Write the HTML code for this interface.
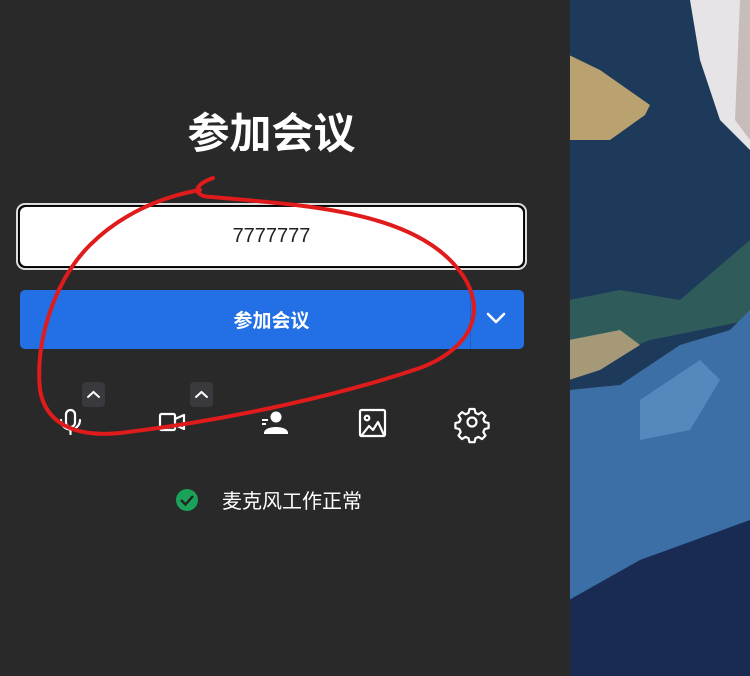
<!DOCTYPE html>
<html><head><meta charset="utf-8"><style>
body{margin:0;width:750px;height:676px;overflow:hidden;background:#292929;font-family:"Liberation Sans","Noto Sans CJK SC",sans-serif;position:relative}
.abs{position:absolute}
</style></head><body>
<div class="abs" style="left:0;top:103px;width:543px;text-align:center;color:#fff;font-size:42px;font-weight:bold;font-family:'Noto Sans CJK SC',sans-serif;line-height:56px">参加会议</div>
<div class="abs" style="left:16px;top:203px;width:507px;height:63px;border:2px solid #ddd;border-radius:9px;background:#000;"></div>
<div class="abs" style="left:19px;top:206px;width:503px;height:59px;border:1px solid #111;border-radius:7px;background:#fff;text-align:center;line-height:59px;font-size:20px;color:#222">7777777</div>
<div class="abs" style="left:20px;top:290px;width:504px;height:59px;border-radius:5px;background:#2370e6;"></div>
<div class="abs" style="left:470px;top:290px;width:1px;height:59px;background:#1a5fc8"></div>
<div class="abs" style="left:20px;top:290px;width:504px;height:59px;line-height:59px;color:#fff;font-weight:bold;font-size:19px;padding-right:0;box-sizing:border-box"><span style="position:absolute;left:0;width:503px;text-align:center;font-family:'Noto Sans CJK SC',sans-serif">参加会议</span></div>
<svg class="abs" style="left:0;top:0" width="750" height="676">
<polyline points="488,314 496,322 504,314" fill="none" stroke="#fff" stroke-width="2.6" stroke-linecap="round" stroke-linejoin="round"/>
<rect x="82" y="382" width="23" height="25" rx="4" fill="#3a3a3e"/>
<rect x="190" y="382" width="23" height="25" rx="4" fill="#3a3a3e"/>
<polyline points="88,397 93.5,392 99,397" fill="none" stroke="#fff" stroke-width="2" stroke-linecap="round"/>
<polyline points="196,397 201.5,392 207,397" fill="none" stroke="#fff" stroke-width="2" stroke-linecap="round"/>
<g fill="none" stroke="#fff" stroke-width="2.2" stroke-linecap="round" stroke-linejoin="round">
<rect x="66" y="410" width="9" height="17" rx="4.5"/>
<path d="M61,420 a9.5,9.5 0 0 0 19,0 M70.5,430 v4"/>
<rect x="160" y="414" width="15" height="16" rx="1.5"/>
<path d="M175,419 l9,-4 v14 l-9,-4"/>
<rect x="360" y="410" width="25" height="26" rx="1.5"/>
<circle cx="367" cy="418" r="2.3"/>
<path d="M362,435 l7,-9 4,4 5,-8 6,13"/>
</g>
<circle cx="276" cy="417" r="5.5" fill="#fff"/>
<path d="M264,433 c0,-8 24,-8 24,0 v1 h-24z" fill="#fff"/>
<path d="M262,420 h6 M262,424 h4" stroke="#fff" stroke-width="2"/>
<g transform="translate(472,422)" fill="none" stroke="#fff" stroke-width="2.2" stroke-linejoin="round">
<path d="M-2.5,-13 h5 l1,4 3,1.3 3.5,-2.2 3.5,3.5 -2.2,3.5 1.3,3 4,1 v5 l-4,1 -1.3,3 2.2,3.5 -3.5,3.5 -3.5,-2.2 -3,1.3 -1,4 h-5 l-1,-4 -3,-1.3 -3.5,2.2 -3.5,-3.5 2.2,-3.5 -1.3,-3 -4,-1 v-5 l4,-1 1.3,-3 -2.2,-3.5 3.5,-3.5 3.5,2.2 3,-1.3z"/>
<circle cx="0" cy="0" r="4.5"/>
</g>
<circle cx="187" cy="500" r="11" fill="#1aa358"/>
<polyline points="181,500 185.5,504.5 193,496" fill="none" stroke="#222" stroke-width="2.4"/>
<!-- photo -->
<rect x="569" y="0" width="181" height="676" fill="#1d3a5a"/>
<polygon points="569,55 600,70 650,105 645,115 610,140 569,140" fill="#b9a170"/>
<polygon points="690,0 750,0 750,150 720,120 700,60" fill="#e6e4e6"/>
<polygon points="735,120 750,140 750,0 740,0" fill="#c6bdbb"/>
<polygon points="569,300 620,290 680,300 750,240 750,320 700,330 650,340 600,360 569,365" fill="#2f5c5a"/>
<polygon points="569,340 620,330 640,345 600,370 569,380" fill="#a59978"/>
<polygon points="569,390 620,385 680,345 730,330 750,310 750,676 569,676" fill="#3b6fa5"/>
<polygon points="569,600 640,560 750,520 750,676 569,676" fill="#192b52"/>
<polygon points="640,400 700,360 720,380 690,430 640,440" fill="#5588bc"/>
<rect x="569" y="0" width="1" height="676" fill="#2b2b2b"/>
<path d="M213,178 C190,186 195,197 212,197 C300,205 400,210 450,260 C490,300 480,345 420,368 C340,395 230,420 120,433 C70,438 45,420 40,390 C35,340 55,280 90,245 C120,215 160,197 200,190" fill="none" stroke="#e01b1b" stroke-width="4" stroke-linecap="round"/>
</svg>
<div class="abs" style="left:222px;top:486px;color:#fff;font-size:20px;line-height:28px;font-family:'Noto Sans CJK SC',sans-serif">麦克风工作正常</div>
</body></html>
